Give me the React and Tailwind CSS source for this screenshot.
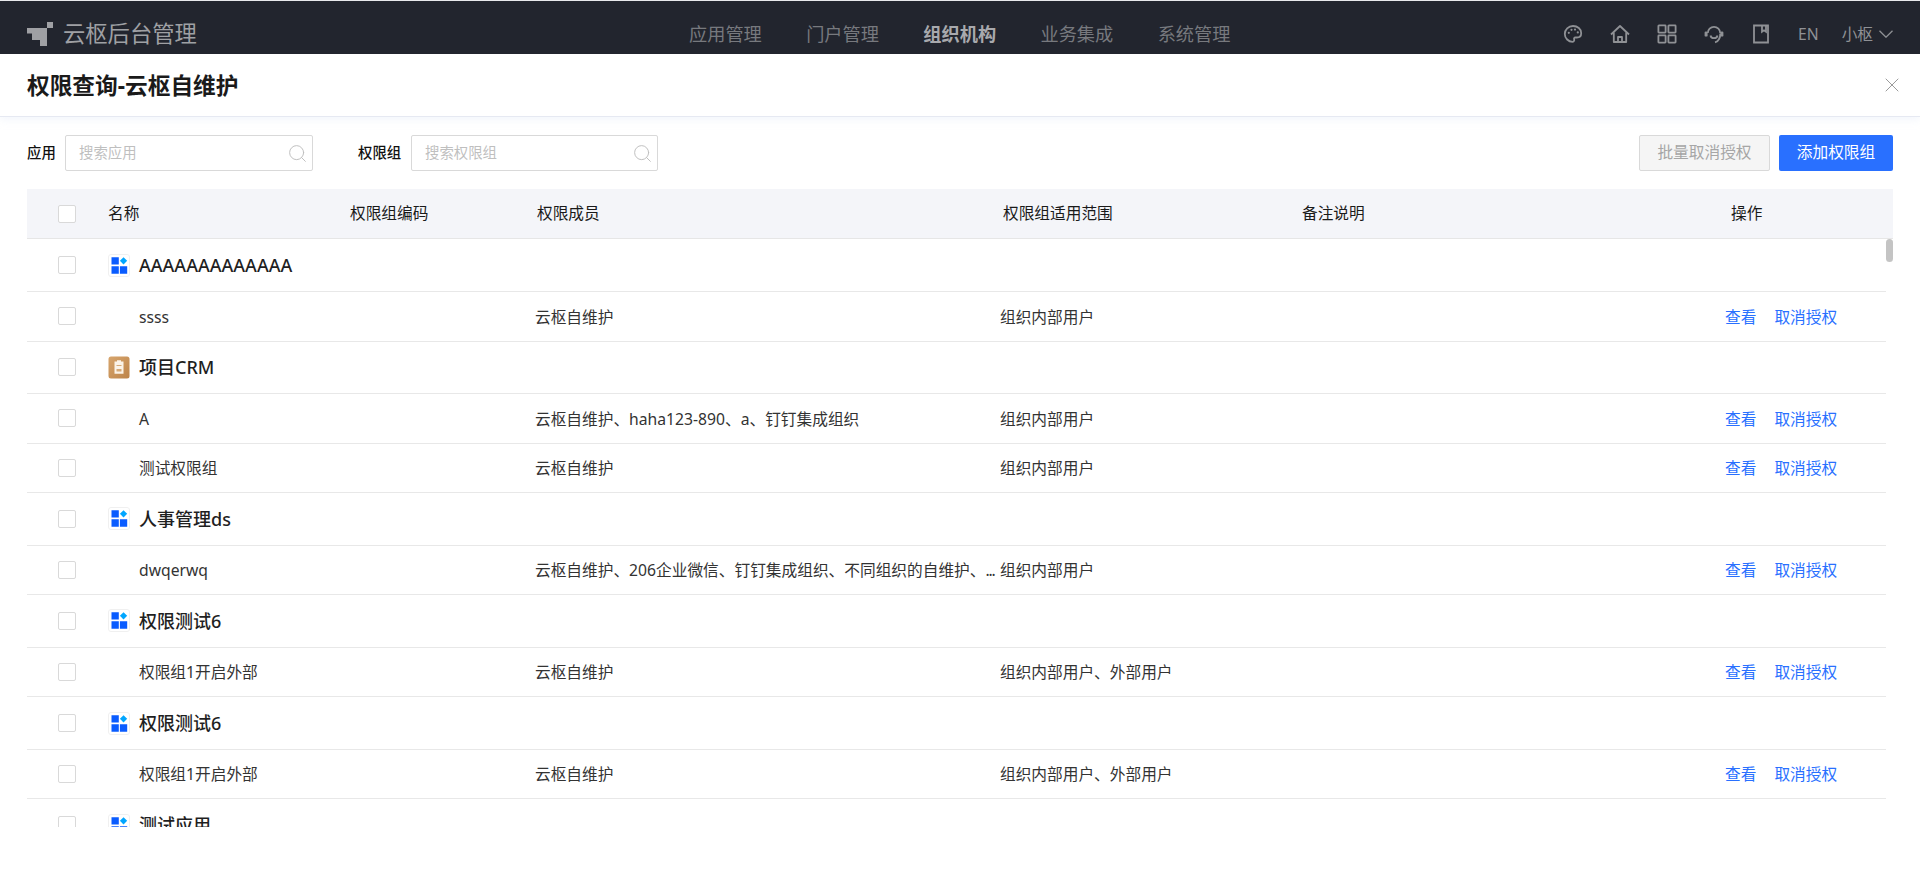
import React from "react";
import { Search, X } from "lucide-react";

const navItems = ["应用管理", "门户管理", "组织机构", "业务集成", "系统管理"];

const rows = [
  { type: "group", name: "AAAAAAAAAAAAA", icon: "grid" },
  { type: "item", name: "ssss", members: "云枢自维护", scope: "组织内部用户" },
  { type: "group", name: "项目CRM", icon: "crm" },
  { type: "item", name: "A", members: "云枢自维护、haha123-890、a、钉钉集成组织", scope: "组织内部用户" },
  { type: "item", name: "测试权限组", members: "云枢自维护", scope: "组织内部用户" },
  { type: "group", name: "人事管理ds", icon: "grid" },
  { type: "item", name: "dwqerwq", members: "云枢自维护、206企业微信、钉钉集成组织、不同组织的自维护、", more: true, scope: "组织内部用户" },
  { type: "group", name: "权限测试6", icon: "grid" },
  { type: "item", name: "权限组1开启外部", members: "云枢自维护", scope: "组织内部用户、外部用户" },
  { type: "group", name: "权限测试6", icon: "grid" },
  { type: "item", name: "权限组1开启外部", members: "云枢自维护", scope: "组织内部用户、外部用户" },
  { type: "group", name: "测试应用", icon: "grid" },
];

const Logo = () => (
  <svg width="26" height="24" viewBox="0 0 26 24" fill="#9fa0a4">
    <path d="M20 0h6v6h-6z" />
    <path d="M0 6h20v18h-7v-6H5v-6.500H0z" />
  </svg>
);

const PaletteIcon = () => (
  <svg width="20" height="20" viewBox="0 0 20 20" fill="none" stroke="#8f9195" strokeWidth="1.8">
    <path d="M10 2c4.600 0 8.200 3 8.200 7.200 0 2.800-2 4.300-4.400 4.300h-1.500c-1 0-1.500.7-1.200 1.500.4 1 .1 2.800-1.500 2.800C5.400 17.800 1.800 14.300 1.800 10 1.800 5.400 5.400 2 10 2z" />
    <circle cx="5.800" cy="8.800" r="1.100" fill="#8f9195" stroke="none" />
    <circle cx="8.500" cy="5.800" r="1.100" fill="#8f9195" stroke="none" />
    <circle cx="12" cy="5.600" r="1.100" fill="#8f9195" stroke="none" />
    <circle cx="14.800" cy="8.400" r="1.100" fill="#8f9195" stroke="none" />
  </svg>
);

const HomeIcon = () => (
  <svg width="20" height="20" viewBox="0 0 20 20" fill="none" stroke="#8f9195" strokeWidth="1.8" strokeLinejoin="round">
    <path d="M1 10.500 10 2l9 8.500" />
    <path d="M3.800 8.500v9.500h12.400V8.500" />
    <path d="M8 18v-5h4v5" />
  </svg>
);

const GridIcon = () => (
  <svg width="20" height="20" viewBox="0 0 20 20" fill="none" stroke="#8f9195" strokeWidth="1.8">
    <rect x="1.400" y="1.400" width="7.200" height="7.200" rx="0.500" />
    <rect x="11.400" y="1.400" width="7.200" height="7.200" rx="0.500" />
    <rect x="1.400" y="11.400" width="7.200" height="7.200" rx="0.500" />
    <rect x="11.400" y="11.400" width="7.200" height="7.200" rx="0.500" />
  </svg>
);

const HeadsetIcon = () => (
  <svg width="20" height="20" viewBox="0 0 20 20" fill="none" stroke="#8f9195" strokeWidth="1.8">
    <path d="M3.800 9a6.200 6.200 0 0 1 12.400 0" />
    <path d="M6.500 11.500c.5 3.500 6.500 3.500 7 0" />
    <path d="M16.200 9.500c.3 3.800-1.500 7.900-5.200 8.900" />
    <rect x="0.600" y="7.600" width="3" height="5" rx="1.200" fill="#8f9195" stroke="none" />
    <rect x="16.400" y="7.600" width="3" height="5" rx="1.200" fill="#8f9195" stroke="none" />
  </svg>
);

const BookIcon = () => (
  <svg width="20" height="20" viewBox="0 0 20 20" fill="none" stroke="#8f9195" strokeWidth="1.8">
    <path d="M3 1.500h14v17H3z" />
    <path d="M11 1.500v6.300l2-1.500 2 1.500V1.500" />
  </svg>
);

const Chevron = () => (
  <svg width="14" height="8" viewBox="0 0 14 8" fill="none" stroke="#8f9195" strokeWidth="1.300">
    <path d="M.5.700 7 7.200 13.500.7" />
  </svg>
);

const AppIcon = () => (
  <svg width="22" height="23" viewBox="0 0 22 23" className="shrink-0">
    <rect x="0.500" y="0.500" width="21" height="22" rx="2.500" fill="#fff" stroke="#f0f0f0" />
    <path d="M3.500 3.200h7.300v7.300H3.500zM3.500 12.300h7.300v7.400H3.500zM11.900 12.300h7.300v7.400h-7.300z" fill="#0a5cff" />
    <path d="M15.500 3.200l3.700 3.600-3.700 3.700-3.600-3.700z" fill="#00a6ff" />
  </svg>
);

const CrmIcon = () => (
  <svg width="22" height="23" viewBox="0 0 22 23" className="shrink-0">
    <defs>
      <linearGradient id="crmBg" x1="0" y1="0" x2="1" y2="1">
        <stop offset="0" stopColor="#d7a56d" />
        <stop offset="1" stopColor="#bd8449" />
      </linearGradient>
    </defs>
    <rect x="0.500" y="0.500" width="21" height="22" rx="2.500" fill="url(#crmBg)" />
    <path d="M9 5.500V4.200h4v1.300h2.500v12.300h-9V5.500z" fill="#fbf3e8" />
    <path d="M8.500 9h5v.9h-5zM8.500 13h5v2.500h-5z" fill="#d6aa78" />
  </svg>
);

const Checkbox = () => <span className="block w-[18px] h-[18px] rounded-[2px] border border-[#d9d9d9] bg-white" />;

const TopNav = () => (
  <div className="h-[54px] shrink-0 bg-[#22252e] border-t border-[#e8e9ec] flex items-start pt-[20px] pl-[27px] pr-[27px] relative">
    <div className="flex items-center gap-[10px] w-[200px] -mt-[1px]">
      <Logo />
      <span className="text-[22.300px] leading-[28px] text-[#9fa0a4]">云枢后台管理</span>
    </div>
    <div className="absolute left-[689px] top-[20px] flex gap-[44.400px]">
      {navItems.map((item) => (
        <span
          key={item}
          className={`text-[18.200px] leading-[26px] ${item === "组织机构" ? "font-bold text-[#a8a9ad]" : "text-[#77797e]"}`}
        >
          {item}
        </span>
      ))}
    </div>
    <div className="ml-auto flex items-center gap-[27px] mt-[3px]">
      <PaletteIcon />
      <HomeIcon />
      <GridIcon />
      <HeadsetIcon />
      <BookIcon />
      <div className="flex items-center text-[#8f9195]">
        <span className="text-[15.700px] leading-[20px] mr-[23px]">EN</span>
        <span className="text-[15.700px] leading-[20px]">小枢</span>
        <span className="ml-[6px]">
          <Chevron />
        </span>
      </div>
    </div>
  </div>
);

const SearchBox = ({ placeholder, className }) => (
  <div className={`h-[36px] flex items-center justify-between pl-[13px] pr-[4px] border border-[#d9d9d9] rounded-[2px] bg-white ${className}`}>
    <span className="text-[14.400px] text-[#bfbfbf]">{placeholder}</span>
    <Search size={21} strokeWidth={1.1} className="text-[#bdbdbd]" />
  </div>
);

const Row = ({ row }) => {
  if (row.type === "group") {
    return (
      <div className="h-[52.800px] shrink-0 border-b border-[#e8e8e8] grid grid-cols-[81px_1fr] items-center">
        <div className="pl-[31px]">
          <Checkbox />
        </div>
        <div className="flex items-center gap-[9px]">
          {row.icon === "crm" ? <CrmIcon /> : <AppIcon />}
          <span className="pt-[1px] text-[18px] font-medium text-[#1f1f1f]">{row.name}</span>
        </div>
      </div>
    );
  }
  return (
    <div className="h-[49.330px] shrink-0 border-b border-[#e8e8e8] grid grid-cols-[81px_427px_465px_725px_1fr] items-center text-[15.700px] text-[#333333]">
      <div className="pl-[31px]">
        <Checkbox />
      </div>
      <div className="pl-[31px] pt-[2px]">{row.name}</div>
      <div className="pt-[2px] whitespace-nowrap">
        {row.members}
        {row.more && <span className="tracking-[-1.200px]">...</span>}
      </div>
      <div className="pt-[2px]">{row.scope}</div>
      <div className="flex gap-[18px] pt-[2px] text-[#2970ff] whitespace-nowrap">
        <span>查看</span>
        <span>取消授权</span>
      </div>
    </div>
  );
};

const App = () => {
  return (
    <div className="w-[1920px] h-[870px] overflow-hidden bg-white flex flex-col [font-family:'Noto_Sans','Noto_Sans_CJK_SC',sans-serif]">
      <TopNav />

      <div className="h-[63px] shrink-0 border-b border-[#e6e9f2] flex items-center justify-between pl-[27px] pr-[21px] shadow-[0_3px_8px_rgba(220,228,245,0.35)]">
        <h1 className="pt-[2px] text-[22.700px] font-bold text-[#1a1a1a]">权限查询-云枢自维护</h1>
        <X size={24} strokeWidth={1} className="text-[#9a9a9a] -mr-[5px]" />
      </div>

      <div className="px-[27px]">
        <div className="flex items-center mt-[18px]">
          <span className="w-[38px] text-[14.400px] font-medium text-[#111111]">应用</span>
          <SearchBox placeholder="搜索应用" className="w-[248px]" />
          <span className="ml-[45px] w-[53px] text-[14.400px] font-medium text-[#111111]">权限组</span>
          <SearchBox placeholder="搜索权限组" className="w-[247px]" />
          <button className="ml-auto w-[131px] h-[36px] border border-[#d9d9d9] rounded-[2px] bg-[#f5f5f5] text-[15.700px] text-[#a6a6a6]">
            批量取消授权
          </button>
          <button className="ml-[9px] w-[114px] h-[36px] rounded-[2px] bg-[#2970ff] text-[15.700px] text-white">
            添加权限组
          </button>
        </div>

        <div className="mt-[18px] h-[50px] bg-[#f4f5f9] border-b border-[#e6e6e6] grid grid-cols-[81px_242px_187px_466px_299px_429px_1fr] items-center text-[15.700px] text-[#1a1a1a]">
          <div className="pl-[31px]">
            <Checkbox />
          </div>
          <div>名称</div>
          <div>权限组编码</div>
          <div>权限成员</div>
          <div>权限组适用范围</div>
          <div>备注说明</div>
          <div>操作</div>
        </div>

        <div className="relative h-[588px] overflow-hidden pt-[0.400px] pr-[7px]">
          {rows.map((row, i) => (
            <Row key={i} row={row} />
          ))}
          <div className="absolute right-0 top-0 w-[7px] h-[23px] rounded-full bg-[#c4c4c4]" />
        </div>
      </div>
    </div>
  );
};

export default App;
